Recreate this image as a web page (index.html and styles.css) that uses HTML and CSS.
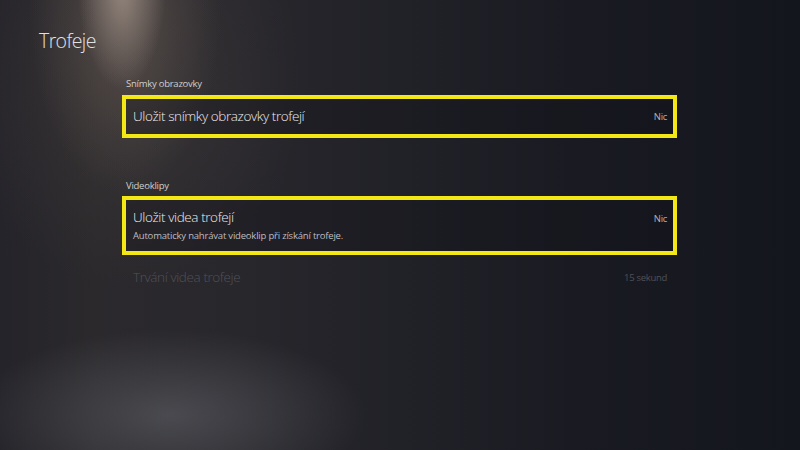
FILE: index.html
```html
<!DOCTYPE html>
<html lang="cs">
<head>
<meta charset="utf-8">
<title>Trofeje</title>
<link rel="stylesheet" href="styles.css">
</head>
<body>
<div class="screen">
  <h1 class="title">Trofeje</h1>
  <div class="list">
    <div class="section-label">Snímky obrazovky</div>
    <div class="row focused">
      <div class="row-text">
        <div class="row-title">Uložit snímky obrazovky trofejí</div>
      </div>
      <div class="row-value">Nic</div>
    </div>
    <div class="section-label second">Videoklipy</div>
    <div class="row focused tall">
      <div class="row-text">
        <div class="row-title">Uložit videa trofejí</div>
        <div class="row-desc">Automaticky nahrávat videoklip při získání trofeje.</div>
      </div>
      <div class="row-value top">Nic</div>
    </div>
    <div class="row disabled">
      <div class="row-text">
        <div class="row-title">Trvání videa trofeje</div>
      </div>
      <div class="row-value">15 sekund</div>
    </div>
  </div>
</div>
</body>
</html>
```
FILE: styles.css
```css
html, body {
  margin: 0;
  padding: 0;
}
body {
  width: 800px;
  height: 450px;
  overflow: hidden;
  font-family: "Open Sans", Roboto, sans-serif;
  color: #e4e4e6;
}
.screen {
  width: 800px;
  height: 450px;
  box-sizing: border-box;
  padding: 28px 0 0 39px;
  background:
    radial-gradient(ellipse 55px 130px at 122px -15px, rgba(185,168,155,0.65), rgba(185,168,155,0) 80%),
    radial-gradient(ellipse 120px 230px at 125px 10px, rgba(140,122,110,0.35), rgba(140,122,110,0) 80%),
    radial-gradient(ellipse 220px 260px at 130px 80px, rgba(100,88,80,0.25), rgba(100,88,80,0) 80%),
    radial-gradient(ellipse 250px 110px at 170px 415px, rgba(100,102,108,0.55), rgba(100,102,108,0) 78%),
    linear-gradient(90deg, #25242a 0%, #2b292c 12%, #28272c 30%, #212128 50%, #1a1b22 72%, #14161d 100%);
}
.title {
  margin: 0;
  font-weight: 300;
  font-size: 19.5px;
  line-height: 26px;
  color: #e2e2e4;
  letter-spacing: -0.6px;
}
.list {
  margin: 23px 0 0 83px;
  width: 555px;
  display: flex;
  flex-direction: column;
}
.section-label {
  font-size: 9.5px;
  line-height: 14px;
  padding-left: 4px;
  color: #cfcece;
  margin-bottom: 4px;
  letter-spacing: -0.25px;
}
.section-label.second {
  margin-top: 41px;
  margin-bottom: 3px;
}
.row {
  box-sizing: border-box;
  height: 43px;
  border: 4px solid transparent;
  padding: 0 6px 0 7px;
  display: flex;
  align-items: center;
  justify-content: space-between;
}
.row.focused {
  border-color: #f3e716;
  background: rgba(16,17,24,0.3);
}
.row.tall {
  height: 59px;
  align-items: flex-start;
  padding-top: 9px;
}
.row-title {
  font-size: 13.5px;
  font-weight: 300;
  line-height: 17px;
  letter-spacing: -0.4px;
  color: #ececee;
}
.row-desc {
  font-size: 9.5px;
  line-height: 14px;
  margin-top: 3px;
  letter-spacing: -0.2px;
  color: #bdbdc0;
}
.row-value {
  font-size: 9.5px;
  letter-spacing: -0.3px;
  color: #b4b4b9;
}
.row-value.top {
  margin-top: 3px;
}
.row.disabled .row-title,
.row.disabled .row-value {
  color: #505057;
}
.row.disabled {
  margin-top: 1px;
}
```
